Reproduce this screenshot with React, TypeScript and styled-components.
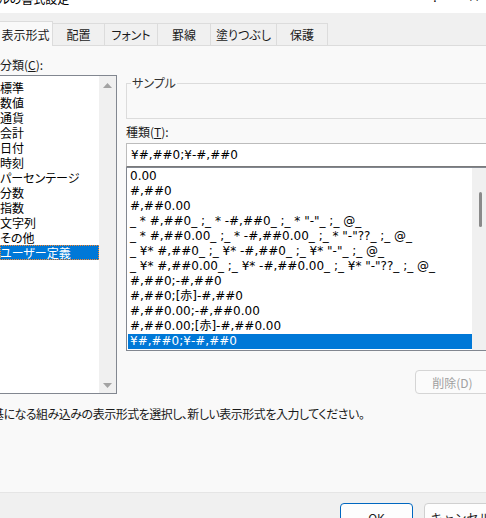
import styled, { createGlobalStyle } from 'styled-components';

const GlobalStyle = createGlobalStyle`
  body {
    margin: 0;
    background: #f9f9f9;
    font-family: "Noto Sans CJK JP", "Noto Sans", sans-serif;
    font-feature-settings: "palt";
    color: #000;
  }
`;

const categories = [
  '標準', '数値', '通貨', '会計', '日付', '時刻', 'パーセンテージ',
  '分数', '指数', '文字列', 'その他', 'ユーザー定義',
];

const formats = [
  '0.00',
  '#,##0',
  '#,##0.00',
  '_ * #,##0_ ;_ * -#,##0_ ;_ * "-"_ ;_ @_',
  '_ * #,##0.00_ ;_ * -#,##0.00_ ;_ * "-"??_ ;_ @_',
  '_ ¥* #,##0_ ;_ ¥* -#,##0_ ;_ ¥* "-"_ ;_ @_',
  '_ ¥* #,##0.00_ ;_ ¥* -#,##0.00_ ;_ ¥* "-"??_ ;_ @_',
  '#,##0;-#,##0',
  '#,##0;[赤]-#,##0',
  '#,##0.00;-#,##0.00',
  '#,##0.00;[赤]-#,##0.00',
  '¥#,##0;¥-#,##0',
];

const tabs = [
  { label: '表示形式', width: 61, active: true },
  { label: '配置', width: 53 },
  { label: 'フォント', width: 54 },
  { label: '罫線', width: 54 },
  { label: '塗りつぶし', width: 67 },
  { label: '保護', width: 52 },
];

const Arrow = ({ down }: { down?: boolean }) => (
  <svg width="9" height="5" viewBox="0 0 9 5">
    <polygon points={down ? '0,0 9,0 4.5,5' : '0,5 9,5 4.5,0'} fill="#a3a3a3" />
  </svg>
);

const App = () => {
  return (
    <>
      <GlobalStyle />
      <Window>
        <TitleBar>
          <TitleText>セルの書式設定</TitleText>
          <TitleControls>
            <span>?</span>
            <span>×</span>
          </TitleControls>
        </TitleBar>

        <TabStrip>
          {tabs.map((t) => (
            <Tab key={t.label} $width={t.width} $active={!!t.active}>
              {t.label}
            </Tab>
          ))}
        </TabStrip>

        <Body>
          <Main>
            <LeftCol>
              <Label>分類(<u>C</u>):</Label>
              <CategoryList>
                <CategoryItems>
                  {categories.map((c) => (
                    <CategoryItem key={c} $selected={c === 'ユーザー定義'}>{c}</CategoryItem>
                  ))}
                </CategoryItems>
                <ScrollBar>
                  <Arrow />
                  <Arrow down />
                </ScrollBar>
              </CategoryList>
            </LeftCol>

            <RightCol>
              <SampleBox>
                <legend>サンプル</legend>
                <SampleInner />
              </SampleBox>
              <TypeLabel>種類(<u>T</u>):</TypeLabel>
              <FormatInput readOnly value="¥#,##0;¥-#,##0" />
              <FormatList>
                <FormatRows>
                  {formats.map((f, i) => (
                    <FormatRow key={i} $selected={i === formats.length - 1}>{f}</FormatRow>
                  ))}
                </FormatRows>
                <VScroll>
                  <Thumb />
                </VScroll>
              </FormatList>
              <DeleteButton disabled>削除(D)</DeleteButton>
            </RightCol>
          </Main>
          <Description>基になる組み込みの表示形式を選択し、新しい表示形式を入力してください。</Description>
        </Body>

        <Footer>
          <DialogButton $primary>OK</DialogButton>
          <DialogButton>キャンセル</DialogButton>
        </Footer>
      </Window>
    </>
  );
};

export default App;

const Window = styled.div`
  width: 486px;
  height: 518px;
  overflow: hidden;
  display: flex;
  flex-direction: column;
  background: #f9f9f9;
`;

const TitleBar = styled.div`
  height: 13px;
  flex-shrink: 0;
  background: #fff;
  display: flex;
  justify-content: space-between;
  overflow: hidden;
`;

const TitleText = styled.div`
  font-size: 12px;
  line-height: 14px;
  margin-top: -8px;
  margin-left: -13px;
`;

const TitleControls = styled.div`
  display: flex;
  gap: 30px;
  font-size: 12px;
  line-height: 14px;
  margin-top: -10px;
  margin-right: 6px;
`;

const TabStrip = styled.div`
  height: 33px;
  flex-shrink: 0;
  box-sizing: border-box;
  background: #f0f0f0;
  border-bottom: 1px solid #dcdcdc;
  display: flex;
  align-items: flex-end;
`;

const Tab = styled.div<{ $width: number; $active: boolean }>`
  width: ${(p) => p.$width}px;
  height: ${(p) => (p.$active ? 25 : 22)}px;
  box-sizing: border-box;
  margin-left: ${(p) => (p.$active ? -8 : -1)}px;
  margin-bottom: ${(p) => (p.$active ? -1 : 0)}px;
  border: 1px solid #dcdcdc;
  border-bottom: none;
  background: ${(p) => (p.$active ? '#f9f9f9' : '#f0f0f0')};
  position: relative;
  z-index: ${(p) => (p.$active ? 1 : 0)};
  display: flex;
  align-items: center;
  justify-content: center;
  padding-left: ${(p) => (p.$active ? 6 : 0)}px;
  font-size: 12px;
  color: #1a1a1a;
  white-space: nowrap;
`;

const Body = styled.div`
  height: 446px;
  flex-shrink: 0;
  box-sizing: border-box;
  padding-top: 10px;
`;

const Main = styled.div`
  display: flex;
  gap: 9px;
  margin-left: -1px;
`;

const LeftCol = styled.div`
  width: 118px;
  flex-shrink: 0;
  display: flex;
  flex-direction: column;
`;

const Label = styled.div`
  font-size: 12px;
  line-height: 17px;
  padding-left: 1px;
  color: #1a1a1a;
`;

const CategoryList = styled.div`
  margin-top: 2px;
  height: 319px;
  box-sizing: border-box;
  border: 1px solid #828790;
  background: #fff;
  display: flex;
`;

const CategoryItems = styled.div`
  flex: 1;
  padding-top: 4px;
`;

const CategoryItem = styled.div<{ $selected: boolean }>`
  height: 15px;
  line-height: 15px;
  font-size: 12px;
  white-space: nowrap;
  color: ${(p) => (p.$selected ? '#fff' : '#000')};
  background: ${(p) => (p.$selected ? '#0078d7' : 'transparent')};
  outline: ${(p) => (p.$selected ? '1px dotted #ff8728' : 'none')};
  outline-offset: -1px;
`;

const ScrollBar = styled.div`
  width: 17px;
  background: #f0f0f0;
  display: flex;
  flex-direction: column;
  justify-content: space-between;
  align-items: center;
  padding: 7px 0 5px;
`;

const RightCol = styled.div`
  width: 364px;
  flex-shrink: 0;
  display: flex;
  flex-direction: column;
`;

const SampleBox = styled.fieldset`
  margin: 20px 0 0;
  padding: 0 0 0 4px;
  border: 1px solid #dcdcdc;
  min-width: 0;

  legend {
    font-size: 12px;
    line-height: 14px;
    padding: 0 1px;
    color: #333;
  }
`;

const SampleInner = styled.div`
  height: 28px;
`;

const TypeLabel = styled(Label)`
  margin-top: 4px;
  padding-left: 0;
`;

const FormatInput = styled.input`
  margin: 3px 0 0;
  height: 24px;
  box-sizing: border-box;
  border: 1px solid #bcbcbc;
  border-bottom-color: #7a7a7a;
  background: #fff;
  padding: 0 0 0 4px;
  font-family: "DejaVu Sans", "Noto Sans CJK JP", sans-serif;
  font-size: 12px;
  color: #000;
  outline: none;
`;

const FormatList = styled.div`
  height: 184px;
  box-sizing: border-box;
  border: 1px solid #828790;
  background: #fff;
  display: flex;
`;

const FormatRows = styled.div`
  flex: 1;
  min-width: 0;
  overflow: hidden;
  padding: 1px 0 0 1px;
`;

const FormatRow = styled.div<{ $selected: boolean }>`
  height: 15px;
  line-height: 15px;
  padding-left: 2px;
  font-family: "DejaVu Sans", "Noto Sans CJK JP", sans-serif;
  font-size: 12px;
  white-space: nowrap;
  color: ${(p) => (p.$selected ? '#fff' : '#000')};
  background: ${(p) => (p.$selected ? '#0078d7' : 'transparent')};
`;

const VScroll = styled.div`
  width: 17px;
  flex-shrink: 0;
  background: #f0f0f0;
  display: flex;
  justify-content: center;
`;

const Thumb = styled.div`
  width: 3px;
  height: 35px;
  margin-top: 24px;
  border-radius: 2px;
  background: #8a8a8a;
`;

const DeleteButton = styled.button`
  align-self: flex-end;
  margin-top: 19px;
  width: 75px;
  height: 24px;
  border: 1px solid #d5d5d5;
  border-radius: 4px;
  background: #fbfbfb;
  color: #a0a0a0;
  font-family: "Noto Sans CJK JP", sans-serif;
  font-size: 12px;
  padding: 0;
`;

const Description = styled.div`
  margin: 11px 0 0 -8px;
  font-size: 12px;
  line-height: 17px;
  letter-spacing: -0.5px;
  white-space: nowrap;
  color: #1a1a1a;
`;

const Footer = styled.div`
  flex-shrink: 0;
  height: 40px;
  box-sizing: border-box;
  border-top: 1px solid #e5e5e5;
  background: #f0f0f0;
  display: flex;
  justify-content: flex-end;
  align-items: flex-start;
  padding-top: 10px;
  gap: 11px;

  & > :last-child {
    margin-right: -11px;
  }
`;

const DialogButton = styled.button<{ $primary?: boolean }>`
  width: 73px;
  height: 28px;
  flex-shrink: 0;
  border: 1px solid ${(p) => (p.$primary ? '#0067c0' : '#d0d0d0')};
  border-radius: 4px;
  background: #fdfdfd;
  color: #1a1a1a;
  font-family: "Noto Sans CJK JP", sans-serif;
  font-size: 12px;
  padding: 0;
`;
